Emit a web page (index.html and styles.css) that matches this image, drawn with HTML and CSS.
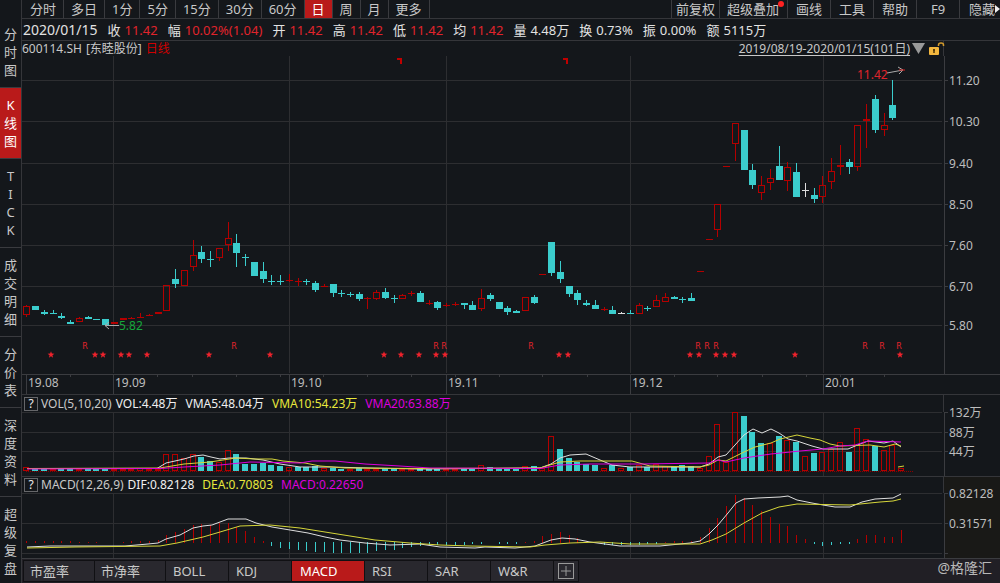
FILE: index.html
```html
<!DOCTYPE html>
<html lang="zh-CN">
<head>
<meta charset="utf-8">
<title>600114.SH 东睦股份 日线</title>
<link rel="stylesheet" href="styles.css">
</head>
<body>
<div class="app">
  <nav class="side">
    <button class="side-item">分<br>时<br>图</button>
    <button class="side-item active">K<br>线<br>图</button>
    <button class="side-item">T<br>I<br>C<br>K</button>
    <button class="side-item">成<br>交<br>明<br>细</button>
    <button class="side-item">分<br>价<br>表</button>
    <button class="side-item">深<br>度<br>资<br>料</button>
    <button class="side-item">超<br>级<br>复<br>盘</button>
  </nav>
  <main class="main">
    <nav class="tabs">
      <button class="tab">分时</button><button class="tab">多日</button><button class="tab">1分</button><button class="tab">5分</button><button class="tab">15分</button><button class="tab">30分</button><button class="tab">60分</button><button class="tab active">日</button><button class="tab">周</button><button class="tab">月</button><button class="tab">更多</button>
      <span class="spacer"></span>
      <button class="tab tight first">前复权</button><button class="tab wide">超级叠加<i class="dot"></i></button><button class="tab tool">画线</button><button class="tab tool">工具</button><button class="tab tool">帮助</button><button class="tab tool">F9</button><button class="tab hide">隐藏<svg class="tri" viewBox="0 0 5 8"><path d="M0 0L5 4L0 8Z"/></svg></button>
    </nav>
    <div class="quote">
      <span class="date">2020/01/15</span>
      <span class="pair">收<b class="up">11.42</b></span>
      <span class="pair">幅<b class="up">10.02%(1.04)</b></span>
      <span class="pair">开<b class="up">11.42</b></span>
      <span class="pair">高<b class="up">11.42</b></span>
      <span class="pair">低<b class="up">11.42</b></span>
      <span class="pair">均<b class="up">11.42</b></span>
      <span class="pair">量<b>4.48万</b></span>
      <span class="pair">换<b>0.73%</b></span>
      <span class="pair">振<b>0.00%</b></span>
      <span class="pair">额<b>5115万</b></span>
    </div>
    <div class="head">
      <div class="head-body">
        <span>600114.SH</span><span>[东睦股份]</span><span class="period">日线</span>
        <span class="spacer"></span>
        <button class="range">2019/08/19-2020/01/15(101日)</button>
        <svg class="down" viewBox="0 0 13 11"><path d="M0 0H13L6.5 11Z"/></svg>
        <svg class="lock" viewBox="0 0 16 14"><rect x="0" y="5" width="10" height="8" rx="1"/><path class="shackle" d="M9.500 4V3Q9.500 1 12 1T14.500 3V4"/><path class="hole" d="M5 7V11M4 8H6"/></svg>
      </div>
      <div class="head-axis"></div>
    </div>
    <svg class="chart" id="price" viewBox="22 56 978 338"></svg>
    <div class="head ind">
      <div class="head-body">
        <button class="help">?</button><span>VOL(5,10,20)</span><span class="white">VOL:4.48万</span><span class="white gap">VMA5:48.04万</span><span class="yellow gap">VMA10:54.23万</span><span class="magenta gap">VMA20:63.88万</span>
      </div>
      <div class="head-axis"></div>
    </div>
    <svg class="chart" id="volume" viewBox="22 412 978 64"></svg>
    <div class="head ind">
      <div class="head-body">
        <button class="help">?</button><span>MACD(12,26,9)</span><span class="white">DIF:0.82128</span><span class="yellow gap">DEA:0.70803</span><span class="magenta gap">MACD:0.22650</span>
      </div>
      <div class="head-axis brown"></div>
    </div>
    <svg class="chart" id="macd" viewBox="22 493 978 65"></svg>
    <footer class="foot">
      <button class="ft">市盈率</button><button class="ft">市净率</button><button class="ft f2">BOLL</button><button class="ft f2">KDJ</button><button class="ft f3 active">MACD</button><button class="ft f2">RSI</button><button class="ft f2">SAR</button><button class="ft f2">W&amp;R</button>
      <button class="add" aria-label="添加指标"><svg viewBox="0 0 16 16"><rect x=".5" y=".5" width="15" height="15"/><path d="M8 3V13M3 8H13"/></svg></button>
      <span class="spacer"></span>
      <span class="mark">@格隆汇</span>
    </footer>
  </main>
</div>
<script src="chart.js"></script>
</body>
</html>
```
FILE: styles.css
```css
* { box-sizing: border-box; }
body {
  margin: 0;
  background: #14171b;
  color: #c8c8c8;
  font: 13px/18px "Noto Sans", "Noto Sans CJK SC", sans-serif;
}
button {
  margin: 0;
  padding: 0;
  border: 0;
  background: none;
  color: inherit;
  font: inherit;
  white-space: nowrap;
}
b { font-weight: 400; }
.app { display: flex; min-height: 100vh; overflow: hidden; }
.side {
  display: flex;
  flex-direction: column;
  flex: 0 0 22px;
  padding-top: 17px;
  border-right: 1px solid #35363a;
  height: 100vh;
  overflow: hidden;
}
.side-item {
  flex: none;
  padding: 8px 0;
  border-bottom: 1px solid #3a3b3f;
  line-height: 18px;
}
.side-item:last-child { border-bottom: 0; }
.active { background: #b91a1a; color: #fff; }
.main { flex: 1; min-width: 0; display: flex; flex-direction: column; }
.spacer { flex: 1; }
.tabs {
  display: flex;
  height: 19px;
  border-bottom: 1px solid #35363a;
}
.tab {
  position: relative;
  padding: 0 7px;
  border-right: 1px solid #3a3b3f;
}
.tab:first-child { padding: 0 7px 0 8px; }
.tight { padding: 0 4px; }
.first { border-left: 1px solid #3a3b3f; }
.wide { padding: 0 8px 0 7px; }
.tool { min-width: 43px; }
.hide { padding: 0 0 0 9px; border: 0; display: flex; align-items: center; }
.tri { flex: none; width: 5px; height: 8px; fill: #eee; }
.dot {
  position: absolute;
  right: 3px;
  top: 1px;
  width: 6px;
  height: 6px;
  border-radius: 50%;
  background: #f22;
}
.quote {
  display: flex;
  align-items: center;
  gap: 10px;
  height: 22px;
  padding-left: 1px;
  border-bottom: 1px solid #35363a;
  color: #e2e2e2;
}
.date { font-size: 14px; }
.pair { display: flex; gap: 4px; white-space: nowrap; }
.up { color: #e0242c; }
.head { display: flex; height: 15px; font-size: 12px; line-height: 16px; }
.head-body {
  display: flex;
  flex: 922 1 0;
  align-items: center;
  gap: 4px;
  border-right: 1px solid #35363a;
  white-space: nowrap;
}
.head-axis { flex: 56 1 0; }
.brown { background: #191917; }
.period { color: #d00000; }
.range { text-decoration: underline; text-underline-offset: 2px; }
.down { width: 13px; height: 11px; fill: #999; margin-left: -2px; }
.lock { width: 16px; height: 14px; fill: #f3b73e; margin-right: -2px; }
.shackle { fill: none; stroke: #d39a2c; stroke-width: 1.5; }
.hole { fill: none; stroke: #52380a; stroke-width: 1.5; }
.ind { height: 18px; border-top: 1px solid #35363a; }
.ind:nth-of-type(n+4) { height: 17px; }
.ind .gap { margin-left: 4px; }
.help {
  width: 14px;
  height: 14px;
  margin-left: 2px;
  border: 1px solid #66676a;
  line-height: 12px;
  color: #eee;
}
.help + span { margin-left: -1px; }
.white { color: #f0f0f0; }
.yellow { color: #e8e83c; }
.magenta { color: #dc00dc; }
.chart { display: block; width: 100%; height: auto; font-size: 12px; overflow: visible; }
.grid { stroke: #2d2e31; fill: none; shape-rendering: crispEdges; }
.axis { stroke: #3b3c40; fill: none; shape-rendering: crispEdges; }
.lab { fill: #bdbdbd; }
.r { stroke: #b40000; fill: none; shape-rendering: crispEdges; }
.c { stroke: #3bcdcd; fill: #3bcdcd; shape-rendering: crispEdges; }
.w { stroke: #ddd; fill: #ddd; shape-rendering: crispEdges; }
.base { stroke: #8c0000; stroke-dasharray: 1 1; shape-rendering: crispEdges; }
.l-white { stroke: #dedede; fill: none; }
.l-yellow { stroke: #d6d63a; fill: none; }
.l-magenta { stroke: #dc00dc; fill: none; }
.axis-bg { fill: #191917; }
.star { fill: #f0222c; }
.evt { fill: #e0242c; font-family: "DejaVu Sans", sans-serif; font-size: 8px; text-anchor: middle; }
.low { fill: #16a83c; }
.high { fill: #e0242c; }
.arrow { stroke: #aaa; fill: none; }
.arrow-red { stroke: #d22; fill: none; }
.flag { fill: #c00000; }
.foot {
  display: flex;
  flex: 1;
  min-height: 25px;
  padding: 2px 8px 2px 2px;
  border-top: 1px solid #3b3c40;
  background: #211f25;
  gap: 1px;
}
.ft {
  width: 70px;
  padding-left: 6px;
  background: #29282e;
  box-shadow: 0 0 0 1px #101013;
  text-align: left;
}
.f2 { width: 62px; padding-left: 7px; }
.f3 { width: 72px; padding-left: 8px; }
.ft.active { background: #b91a1a; }
.add { width: 24px; display: flex; align-items: center; justify-content: center; background: #29282e; box-shadow: 0 0 0 1px #101013; }
.add svg { width: 16px; height: 16px; fill: none; stroke: #999; }
.mark { margin-top: -2px; font-size: 14px; color: #b8b8b8; white-space: nowrap; }
```
FILE: chart.js
```js
const X = i => Math.round(26.4 + i * 8.746) + 0.5;
const line = (cls, x1, y1, x2, y2) =>
  `<line class="${cls}" x1="${x1}" y1="${y1}" x2="${x2}" y2="${y2}"/>`;
const poly = (cls, pts) => `<polyline class="${cls}" points="${pts}"/>`;
const label = (x, y, t, cls = "lab") => `<text class="${cls}" x="${x}" y="${y}">${t}</text>`;
const months = [113.5, 289.5, 446.5, 630.5, 823.5];

/* kind, body top, body bottom, high, low */
const candles = `r 306 315 305 317;c 306 310;c 312 314 310 315;c 313 314 310 314;c 316 318 313 319;c 322 324 320;r 318 322 317;c 317 319 316;c 319 320;c 319 325;r 322 324;r 318 320;r 318 319 317;r 317 318 313;r 315 316 314;r 312 314;r 285 311;c 279 284 269 288;r 270 286;r 255 267 240 271;c 252 259 246 263;c 259 260 251 267;r 248 258 248 261;r 238 245 222 251;c 243 253 234 267;c 257 258 254 266;c 262 276;c 271 279 262 283;c 281 282 275 285;c 281 282 275 285;r 280 281 274 282;r 281 282 278 286;c 281 282 279 285;c 283 290 281 292;r 286 287 284;c 284 293 284 297;c 293 294 290 297;c 294 295 292 297;c 294 299 292 301;r 298 298 297 309;r 292 299 290 300;c 292 298 288 299;c 298 299 295 303;r 295 299 294;r 293 294 291 296;c 293 302 291;r 303 303 300 305;c 302 308 301 310;r 305 305 303 307;r 304 304 302 306;c 303 305 303 309;c 305 310 301;r 298 309 289 311;c 295 299 293 301;c 302 309;c 308 312 306 315;c 311 313 310;r 297 311;c 297 303 295 304;r 274 274;c 242 273 242 276;c 272 279 261 283;c 286 294 286 297;c 293 300 290 305;c 303 305 300 306;c 305 309 300;r 309 309 307 311;c 310 314 306;w 313 314 312;c 313 314 310;r 305 314 303;c 308 309 306 311;r 300 307 295;r 297 302 293;c 297 299 296;c 299 300 297 303;c 298 301 293;r 271 271;r 239 239;r 204 230 204 237;r 166 166;r 123 144 123 161;c 130 170;c 170 185 164 189;r 185 193 176 200;r 178 183 169 190;c 166 180 146;r 167 181 162 191;c 172 197 163;w 190 190 183 197;c 195 199 188 203;r 185 197 176 203;r 171 182 158 189;r 165 167 145 175;c 162 167 159 174;r 125 167 125 171;r 119 121 104 148;c 99 130 95 133;r 125 130 113 136;c 105 118 80 120`
  .split(";").map(s => s.split(" "));

function candle(d, i) {
  const k = d[0], [t, b, h = t, l = b] = d.slice(1).map(Number), x = X(i);
  let s = "";
  if (h < t) s += line(k, x, h, x, t);
  if (l > b) s += line(k, x, b, x, l);
  if (b - t < 2) return s + line(k, x - 3.5, t + 0.5, x + 3.5, t + 0.5);
  return s + `<rect class="${k}" x="${x - 3}" y="${t + 0.5}" width="6" height="${b - t - 1}"/>`;
}
function star(x) {
  let p = "";
  for (let n = 0; n < 10; n++) {
    const r = n % 2 ? 1.5 : 3.6, a = Math.PI * (n / 5 - 0.5);
    p += `${(x + r * Math.cos(a)).toFixed(1)},${(354.8 + r * Math.sin(a)).toFixed(1)} `;
  }
  return `<polygon class="star" points="${p}"/>`;
}

let s = "";
[[80.5, "11.20"], [121.5, "10.30"], [163.5, "9.40"], [204.5, "8.50"], [245.5, "7.60"], [286.5, "6.70"], [325.5, "5.80"]]
  .forEach(([y, t]) => { s += line("grid", 22, y, 942, y) + line("axis", 944, y, 948, y) + label(949, y + 4.5, t); });
months.forEach(x => { s += line("grid", x, 56, x, 373) + line("axis", x, 374, x, 394); });
s += line("axis", 944.5, 56, 944.5, 374) + line("axis", 22, 374.5, 1000, 374.5) + line("axis", 26.5, 374, 26.5, 394);
[70, 157, 192, 236, 280, 323, 367, 411, 455, 499, 542, 587, 674, 717, 762, 806, 840, 884]
  .forEach(x => { s += line("axis", x + 0.5, 375, x + 0.5, 377); });
[[28, "19.08"], [115, "19.09"], [291, "19.10"], [448, "19.11"], [632, "19.12"], [825, "20.01"]]
  .forEach(([x, t]) => { s += label(x, 387, t); });
s += candles.map(candle).join("");
[51, 95, 103, 121, 129, 147, 209, 270, 384, 401, 419, 436, 445, 559, 568, 690, 699, 716, 725, 734, 795, 900]
  .forEach(x => { s += star(x); });
[85, 234, 436, 444, 531, 698, 707, 716, 865, 882, 899].forEach(x => { s += label(x, 349, "R", "evt"); });
s += '<path class="flag" d="M397 58H402V64H400V60H397ZM563 58H568V64H566V60H563Z"/>';
s += '<path class="arrow" d="M119 325.500H105M109 322L105 325.500L109 329M887 73L903 70M898 67L903 70L899 74"/>';
s += '<path class="arrow-red" d="M899 70H905"/>';
s += label(119, 330, "5.82", "low") + label(857, 79, "11.42", "high");
document.getElementById("price").innerHTML = s;

/* volume: kind and top of each bar */
const vols = "r467 c468 c468 r469 c469 c469 r469 c469 c469 c469 r469 r469 r469 r468 r469 r469 r454 r454 r458 r454 c457 c461 r462 r450 c454 c464 c464 c463 c465 c466 r467 c467 c467 c466 r468 c468 c469 r469 c468 r469 r469 c468 c468 r469 r469 c468 c468 c469 r469 r469 c469 c469 r465 c467 c468 c468 c469 r466 c466 r468 r436 c449 c458 c462 c464 c465 r468 c465 r468 c467 r465 c467 r464 r466 c466 c465 c466 r468 r456 r424 r462 r412 c416 c432 c443 r443 c436 r440 c442 r456 c453 r452 r449 r442 c452 r428 r439 c446 r450 r445 r468".split(" ");
s = "";
[[412.5, "132万"], [432.5, "88万"], [451.5, "44万"]]
  .forEach(([y, t]) => { s += line("grid", 22, y, 942, y) + line("axis", 944, y, 948, y) + label(949, y + 4.5, t); });
months.forEach(x => { s += line("grid", x, 412, x, 476); });
s += line("axis", 944.5, 412, 944.5, 476) + line("base", 26, 471.5, 914, 471.5);
vols.forEach((v, i) => {
  const t = +v.slice(1);
  s += `<rect class="${v[0]}" x="${X(i) - 3}" y="${t + 0.5}" width="5" height="${470 - t}"/>`;
});
s += poly("l-white", "27,468.5 157,468.5 166,463 184,459 194,456 203,455 211,457 220,459 229,458 246,458 263,460 280,464 300,467 330,467 370,468 420,469 540,468 551,464 560,458 570,455 586,454 600,460 612,465 630,467 700,467 709,464 718,457 726,455 744,435 753,429 762,433 771,429 779,433 788,439 797,441 812,446 823,449 848,449 860,444 868,441 884,443 893,441 901,447");
s += poly("l-yellow", "27,468.5 160,468 184,464 210,462 236,458 255,459 272,459 283,461 305,463 320,466 345,468 420,468.5 540,468 560,462 580,461 632,461 650,466 700,467 709,465 718,460 726,461 744,452 755,447 771,443 780,439 797,435 810,438 820,440 830,444 840,446 870,445 884,447 895,444 901,446");
s += poly("l-magenta", "27,469 160,468.5 184,467 220,465 250,462 300,463 312,461 335,461 365,464 400,466 430,468 540,468.5 560,465 590,464 640,464 709,463 718,460 726,462 744,458 771,454 800,451 823,449 840,446 855,445 868,441 901,442");
s += poly("l-yellow", "898,467 904,466");
document.getElementById("volume").innerHTML = s;

/* MACD: bar ends; values above 543 hang below the zero line */
const bars = [541, 541, 541, 541, 541, 541, 542, 542, 542, 0, 0, 542, 541, 541, 541, 540, 535, 532, 529, 525, 524, 525, 523, 523, 527, 531, 537, 541, 546, 548, 549, 550, 551, 552, 552, 553, 553, 553, 553, 553, 551, 550, 550, 548, 547, 546, 545, 545, 545, 545, 545, 544, 544, 0, 544, 544, 544, 542, 541, 536, 534, 532, 535, 538, 541, 542, 545, 545, 545, 545, 545, 544, 544, 542, 541, 541, 541, 537, 528, 518, 506, 495, 498, 505, 511, 517, 524, 526, 535, 539, 544, 546, 545, 544, 544, 539, 535, 535, 537, 537, 530];
s = '<rect class="axis-bg" x="945" y="493" width="55" height="65"/>';
[[493.5, "0.82128"], [523.5, "0.31571"], [553.5, ""]]
  .forEach(([y, t]) => { s += line("grid", 22, y, 942, y) + line("axis", 944, y, 948, y) + (t ? label(949, y + 4.5, t) : ""); });
months.forEach(x => { s += line("grid", x, 493, x, 558); });
s += line("axis", 944.5, 493, 944.5, 558);
bars.forEach((y, i) => { if (y) s += y > 543 ? line("c", X(i), 542, X(i), y) : line("r", X(i), y, X(i), 543); });
s += poly("l-white", "27,547 50,546 125,546 148,544 158,543 166,539 180,535 193,528 203,526 212,525 228,519 246,519 256,523 272,527 290,530 308,533 325,537 340,540 365,543 390,545 420,544 440,547 475,548 485,547 515,548 535,546 551,540 562,538 575,539 590,542 620,546 660,546 690,543 700,541 709,534 718,525 728,513 736,503 744,499 758,498 780,497 788,496 797,500 812,503 823,505 835,507 850,507 862,502 875,499 893,498 901,494");
s += poly("l-yellow", "27,548 75,547 160,546 177,543 203,537 220,532 240,526 270,525 300,528 325,532 350,536 375,540 410,543 440,545 470,546 530,547 545,545 570,543 600,542 630,544 700,544 712,540 726,534 744,523 762,513 779,507 797,504 850,505 880,502 893,501 901,499");
document.getElementById("macd").innerHTML = s;
```
